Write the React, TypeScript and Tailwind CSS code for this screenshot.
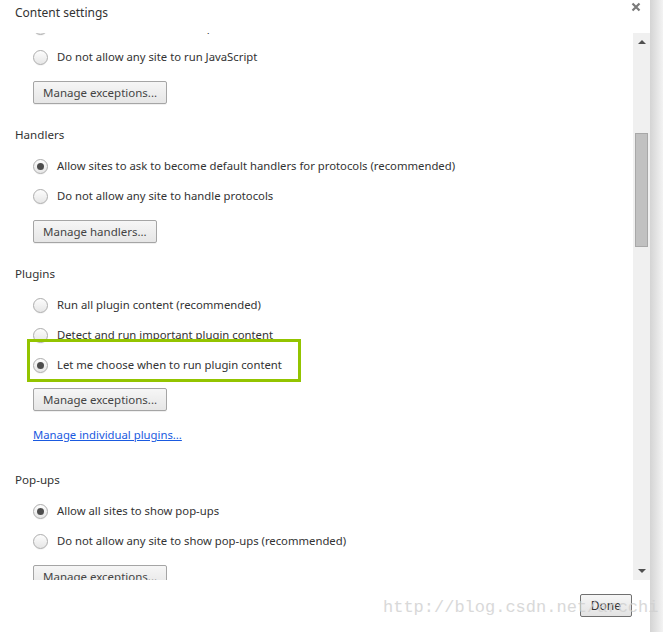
import React from 'react';

const font = { fontFamily: '"Noto Sans", "Open Sans", sans-serif' };

const Radio = ({ checked }: { checked?: boolean }) => (
  <span className="flex h-[15px] w-[15px] shrink-0 items-center justify-center rounded-full border border-[#adadad] bg-gradient-to-b from-[#fdfdfd] to-[#e6e6e6] shadow-[0_1px_0_rgba(0,0,0,0.04)]">
    {checked && <span className="h-[7px] w-[7px] rounded-full bg-[#4d4d4d]" />}
  </span>
);

const RadioRow = ({ label, checked }: { label: string; checked?: boolean }) => (
  <div className="flex h-[30px] items-center pl-[33px]">
    <Radio checked={checked} />
    <span className="ml-[9px] text-[11.3px] text-[#333]">{label}</span>
  </div>
);

const Btn = ({ label, className = '' }: { label: string; className?: string }) => (
  <button className={`h-[23px] rounded-[2px] border border-[#a5a5a5] bg-gradient-to-b from-[#f6f6f6] to-[#e6e6e6] px-[9px] text-[11.5px] leading-[20px] text-[#444] shadow-[0_1px_0_rgba(0,0,0,0.06)] ${className}`}>
    {label}
  </button>
);

const Header = ({ label, className = '' }: { label: string; className?: string }) => (
  <div className={`h-[20px] pl-[15px] text-[11.6px] leading-[20px] text-[#333] ${className}`}>{label}</div>
);

const Scrollbar = () => (
  <div className="flex w-[17px] flex-col items-center bg-[#f0f0f0]">
    <div className="flex h-[17px] w-full items-center justify-center">
      <svg width="8" height="5" viewBox="0 0 8 5"><path d="M0 5 L4 1 L8 5 Z" fill="#505050" /></svg>
    </div>
    <div className="mt-[83px] h-[114px] w-[13px] border border-[#a8a8a8] bg-[#c1c1c1]" />
    <div className="flex-1" />
    <div className="flex h-[17px] w-full items-center justify-center">
      <svg width="8" height="5" viewBox="0 0 8 5"><path d="M0 0 L4 4 L8 0 Z" fill="#505050" /></svg>
    </div>
  </div>
);

export default function App() {
  return (
    <div className="relative flex h-[632px] w-[663px] overflow-hidden bg-white" style={font}>
      <div className="relative flex w-[650px] flex-col bg-white">
        <div className="h-[33px] pl-[15px] pt-[3px] text-[12px] leading-[20px] text-[#333]">Content settings</div>
        <button className="absolute right-[8px] top-[1px] flex h-[12px] w-[12px] items-center justify-center">
          <svg width="10" height="10" viewBox="0 0 10 10">
            <path d="M1.5 1.5 L8.5 8.5 M8.5 1.5 L1.5 8.5" stroke="#7a7a7a" strokeWidth="2.2" />
          </svg>
        </button>

        <div className="flex h-[547px]">
          <div className="relative w-[633px] overflow-hidden">
            <div className="-mt-[21px]">
              <RadioRow label="Allow all sites to run JavaScript (recommended)" />
              <RadioRow label="Do not allow any site to run JavaScript" />
              <Btn label="Manage exceptions..." className="ml-[33px] mt-[9px]" />

              <Header label="Handlers" className="mt-[21px] mb-[6px]" />
              <RadioRow label="Allow sites to ask to become default handlers for protocols (recommended)" checked />
              <RadioRow label="Do not allow any site to handle protocols" />
              <Btn label="Manage handlers..." className="ml-[33px] mt-[9px]" />

              <Header label="Plugins" className="mt-[21px] mb-[6px]" />
              <RadioRow label="Run all plugin content (recommended)" />
              <RadioRow label="Detect and run important plugin content" />
              <div className="relative">
                <RadioRow label="Let me choose when to run plugin content" checked />
                <div className="pointer-events-none absolute left-[27px] top-[-11px] h-[43px] w-[274px] border-[3px] border-[#93c400]" />
              </div>
              <Btn label="Manage exceptions..." className="ml-[33px] mt-[8px]" />
              <div className="mt-[14px] h-[20px] pl-[33px] text-[11.3px] leading-[20px]">
                <a href="#" className="text-[#1a5ae0] underline">Manage individual plugins...</a>
              </div>

              <Header label="Pop-ups" className="mt-[25px] mb-[6px]" />
              <RadioRow label="Allow all sites to show pop-ups" checked />
              <RadioRow label="Do not allow any site to show pop-ups (recommended)" />
              <Btn label="Manage exceptions..." className="ml-[33px] mt-[9px]" />
            </div>
          </div>
          <Scrollbar />
        </div>

        <div className="flex flex-1 items-start justify-end pr-[18px] pt-[14px]">
          <button className="h-[23px] rounded-[2px] border border-[#707070] bg-gradient-to-b from-[#f6f6f6] to-[#e3e3e3] px-[10px] text-[12px] text-[#333]">Done</button>
        </div>
      </div>
      <div className="w-[13px] bg-gradient-to-r from-[#d4d4d4] to-[#f3f3f3]" />

      <div
        className="pointer-events-none absolute left-[383px] top-[595px] whitespace-nowrap text-[17px] text-[#d0d0d0] opacity-80"
        style={{ fontFamily: '"Liberation Mono", monospace' }}
      >
        http://blog.csdn.net/arcchi
      </div>
    </div>
  );
}
